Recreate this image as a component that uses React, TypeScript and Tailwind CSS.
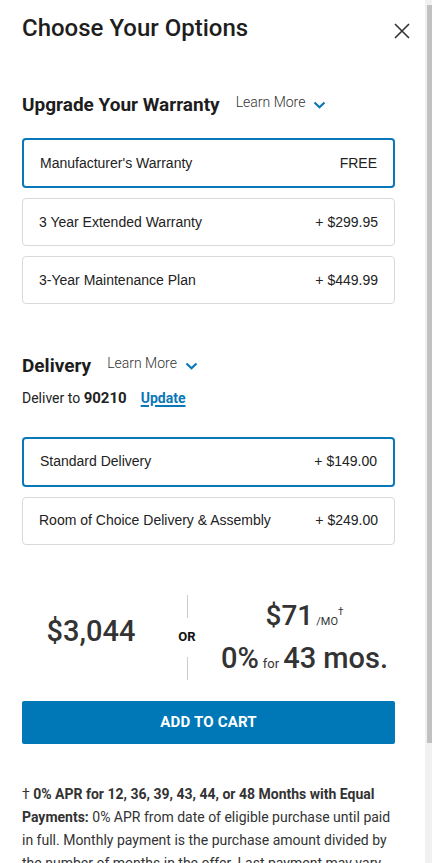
import React from "react";

const din = { fontFamily: "Roboto, 'Noto Sans', sans-serif" };

type Option = { label: string; price: string; selected?: boolean };

const warranty: Option[] = [
  { label: "Manufacturer's Warranty", price: "FREE", selected: true },
  { label: "3 Year Extended Warranty", price: "+ $299.95" },
  { label: "3-Year Maintenance Plan", price: "+ $449.99" },
];

const delivery: Option[] = [
  { label: "Standard Delivery", price: "+ $149.00", selected: true },
  { label: "Room of Choice Delivery & Assembly", price: "+ $249.00" },
];

function Chevron() {
  return (
    <svg width="13" height="8" viewBox="0 0 13 8" className="ml-[8px] mt-[5px]">
      <path d="M1.5 1.5 L6.5 6.2 L11.5 1.5" fill="none" stroke="#0a77b8" strokeWidth="2.2" />
    </svg>
  );
}

function LearnMore() {
  return (
    <span className="flex items-center text-[14px] font-light text-[#333] -translate-y-[4px]" style={din}>
      Learn More
      <Chevron />
    </span>
  );
}

function OptionCard({ o }: { o: Option }) {
  return (
    <div
      className={
        o.selected
          ? "flex h-[50px] items-center justify-between rounded-[4px] border-2 border-[#0a77b8] pl-[16px] pr-[16px]"
          : "flex h-[48px] items-center justify-between rounded-[4px] border border-[#d9d9d9] pl-[16px] pr-[16px]"
      }
      style={{ fontFamily: "'Liberation Sans', Arial, sans-serif" }}
    >
      <span className="text-[14px] text-[#222]">{o.label}</span>
      <span className="text-[14px] text-[#222]">{o.price}</span>
    </div>
  );
}

export default function App() {
  return (
    <div className="flex h-[863px] w-[432px] overflow-hidden bg-white text-[#1d1d1d]">
      <div className="w-[425px] shrink-0 pl-[22px] pr-[30px]">
        <div className="flex items-start justify-between pt-[12px]">
          <h1 className="text-[24px] font-medium leading-[32px] text-[#1e1e1e]" style={din}>
            Choose Your Options
          </h1>
          <svg width="18" height="18" viewBox="0 0 18 18" className="-mr-[16px] mt-[10px]">
            <path d="M2 2 L16 16 M16 2 L2 16" stroke="#333" strokeWidth="1.6" />
          </svg>
        </div>

        <div className="mt-[49px] flex items-end gap-[16px]">
          <h2 className="text-[19px] font-bold leading-[24px]" style={din}>
            Upgrade Your Warranty
          </h2>
          <LearnMore />
        </div>
        <div className="mt-[21px] flex flex-col gap-[10px]">
          {warranty.map((o) => (
            <OptionCard key={o.label} o={o} />
          ))}
        </div>

        <div className="mt-[50px] flex items-end gap-[16px]">
          <h2 className="text-[19px] font-bold leading-[24px]" style={din}>
            Delivery
          </h2>
          <LearnMore />
        </div>
        <div className="mt-[9px] text-[14px] text-[#222]" style={din}>
          Deliver to <span className="text-[15px] font-bold">90210</span>
          <a className="ml-[14px] font-bold text-[#0a77b8] underline decoration-[1.5px] underline-offset-2">Update</a>
        </div>
        <div className="mt-[27px] flex flex-col gap-[10px]">
          {delivery.map((o) => (
            <OptionCard key={o.label} o={o} />
          ))}
        </div>

        <div className="mt-[50px] flex h-[85px] items-stretch" style={din}>
          <div className="flex w-[138px] items-center justify-center pb-[10px] text-[29px] font-medium text-[#333]">
            $3,044
          </div>
          <div className="flex w-[54px] flex-col items-center justify-between">
            <div className="h-[23px] w-px bg-[#ccc]" />
            <div className="text-[13px] font-bold text-[#111]">OR</div>
            <div className="h-[23px] w-px bg-[#ccc]" />
          </div>
          <div className="flex flex-1 flex-col items-center text-[#333]">
            <div className="flex h-[42px] items-baseline">
              <span className="text-[28px] font-medium leading-[42px]">$71</span>
              <span className="ml-[3px] text-[11px]">/MO</span>
              <span className="-translate-y-[10px] text-[10px]">†</span>
            </div>
            <div className="flex h-[42px] items-baseline">
              <span className="text-[29px] font-medium leading-[42px]">0%</span>
              <span className="mx-[4px] text-[13px]">for</span>
              <span className="text-[29px] font-medium leading-[42px]">43 mos.</span>
            </div>
          </div>
        </div>

        <button
          className="mt-[21px] flex h-[43px] w-full items-center justify-center rounded-[2px] bg-[#0078b8] text-[15px] font-bold tracking-[0.2px] text-white"
          style={din}
        >
          ADD TO CART
        </button>

        <p className="mt-[39px] text-[14px] leading-[23px] text-[#333]" style={din}>
          <span className="font-normal">†</span>
          <span className="font-bold"> 0% APR for 12, 36, 39, 43, 44, or 48 Months with Equal Payments:</span> 0% APR
          from date of eligible purchase until paid in full. Monthly payment is the purchase amount divided by the
          number of months in the offer. Last payment may vary.
        </p>
      </div>
      <div className="flex w-[7px] shrink-0 flex-col bg-[#f1f1f1] pl-[2px] pt-[5px] pb-[3px]">
        <div className="h-[738px] w-full bg-[#c1c1c1]" />
      </div>
    </div>
  );
}
